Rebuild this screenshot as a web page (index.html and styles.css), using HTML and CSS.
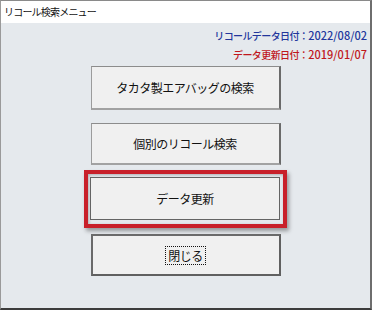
FILE: index.html
```html
<!DOCTYPE html>
<html lang="ja">
<head>
  <meta charset="UTF-8" />
  <meta name="viewport" content="width=device-width, initial-scale=1.0" />
  <title>リコール検索メニュー</title>
  <link rel="stylesheet" href="styles.css">
</head>
<body>

  <div class="window">
    <div class="titlebar">リコール検索メニュー</div>

    <div class="content">
      <div class="dates">
        <div class="recall-date">リコールデータ日付：<span class="num">2022/08/02</span></div>
        <div class="update-date">データ更新日付：<span class="num">2019/01/07</span></div>
      </div>

      <div class="menu">
        <button class="btn btn-first">タカタ製エアバッグの検索</button>
        <button class="btn btn-second">個別のリコール検索</button>
        <!-- annotation frame -->
        <div class="highlight">
          <button class="btn btn-focus">データ更新</button>
        </div>
        <button class="btn btn-default"><span class="focus-rect">閉じる</span></button>
      </div>
    </div>
  </div>

</body>
</html>
```

FILE: styles.css
```css
body {
  margin: 0;
  font-family: "Noto Sans CJK JP", "Noto Sans", sans-serif;
  background: #e5e9ed;
}

.window {
  width: 372px;
  height: 310px;
  box-sizing: border-box;
  border-top: 1px solid #8a8a8a;
  border-left: 1px solid #9a9a9a;
  border-right: 2px solid #6e6e6e;
  border-bottom: 2px solid #3c3c3c;
  background: #e5e9ed;
  display: flex;
  flex-direction: column;
}

.titlebar {
  height: 22px;
  background: #fff;
  font-size: 10px;
  letter-spacing: -0.8px;
  line-height: 22px;
  padding-left: 3px;
  color: #111;
}

.content {
  flex: 1;
}

.dates {
  text-align: right;
  padding: 3px 3px 0 0;
  font-size: 10px;
  line-height: 18px;
  letter-spacing: -0.6px;
  font-weight: 500;
}

.dates .num {
  font-size: 11px;
  letter-spacing: 0;
}

.recall-date {
  color: #22369c;
}

.update-date {
  color: #c0171c;
}

.menu {
  display: flex;
  flex-direction: column;
  align-items: center;
  margin-top: 2px;
}

.btn {
  width: 190px;
  height: 43px;
  margin: 0;
  box-sizing: border-box;
  background: #f0f0f0;
  font-family: inherit;
  font-size: 12px;
  letter-spacing: -0.5px;
  color: #111;
  padding: 0;
}

.btn-first,
.btn-second {
  border-top: 1px solid #8c8c8c;
  border-left: 1px solid #9c9c9c;
  border-right: 2px solid #6a6a6a;
  border-bottom: 2px solid #a2a2a2;
}

.btn-first {
  height: 44px;
}

.btn-second {
  height: 42px;
  margin-top: 13px;
}

.highlight {
  margin-top: 5px;
  border: 4px solid #c8202a;
  padding: 3px 3px 4px 2px;
  box-shadow: 2px 3px 4px rgba(0, 0, 0, 0.35), inset 1px 1px 3px rgba(0, 0, 0, 0.25);
}

.btn-focus {
  display: block;
  border: 1px solid #646464;
}

.btn-default {
  margin-top: 6px;
  height: 42px;
  border: 2px solid #606060;
  border-top-color: #6a6a6a;
  border-left-color: #6a6a6a;
}

.focus-rect {
  display: inline-block;
  border: 1px dotted #111;
  padding: 0 2px;
  line-height: 17px;
}
```
